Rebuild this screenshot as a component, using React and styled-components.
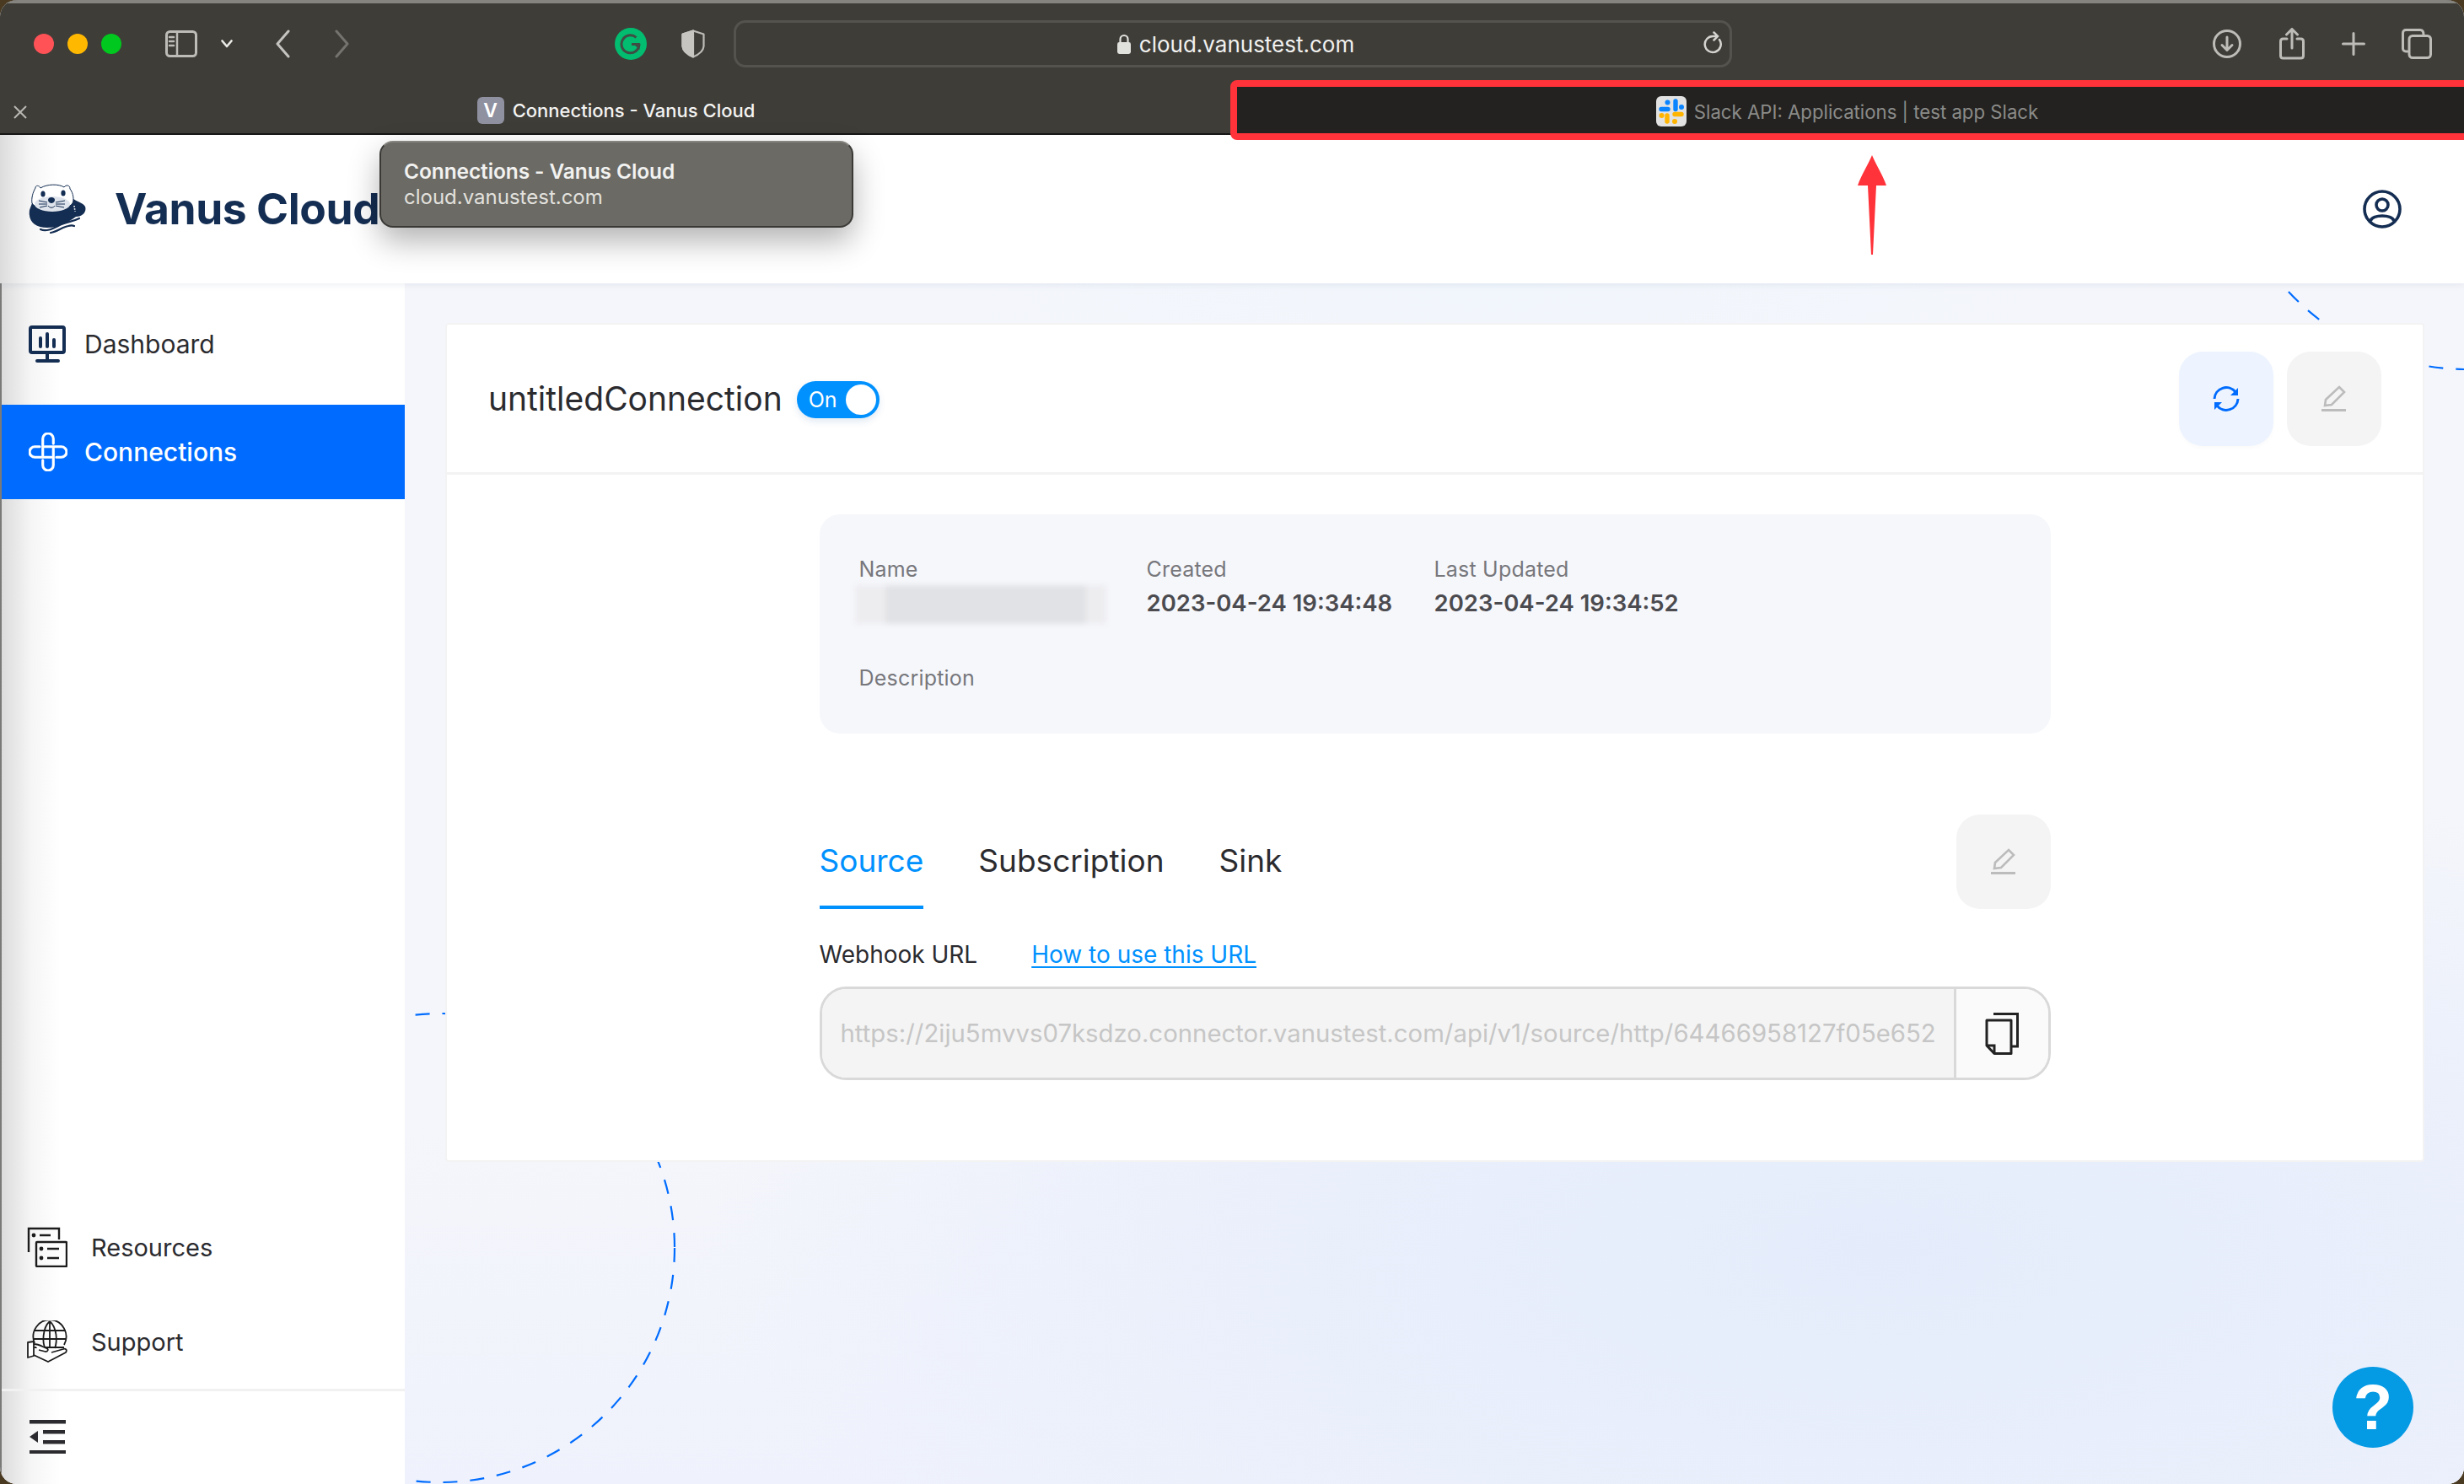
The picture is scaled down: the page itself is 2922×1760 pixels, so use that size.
import React from "react";
import styled, { createGlobalStyle } from "styled-components";

const Global = createGlobalStyle`
  html, body { margin: 0; padding: 0; background: #4a3a22; }
  * { box-sizing: border-box; }
  #root { width: 2922px; height: 1760px; }
`;

const Windowed = styled.div`
  position: relative; width: 2922px; height: 1760px; overflow: hidden;
  border-radius: 20px; display: flex; flex-direction: column;
  font-family: Inter, "Liberation Sans", sans-serif; background: #fff;
`;
const Toolbar = styled.div`
  height: 100px; flex: none; background: #3f3d38; border-top: 4px solid #85847f;
  display: flex; align-items: center; padding: 0 38px 0 40px; position: relative;
`;
const Light = styled.span`
  width: 24px; height: 24px; border-radius: 50%; background: ${p => p.$c}; margin-right: 16px; flex: none;
`;
const ToolIcon = styled.svg`
  flex: none; margin-left: ${p => p.$auto ? "auto" : `${p.$ml || 0}px`}; display: block;
  fill: none; stroke: ${p => p.$stroke || "#bdbcb7"}; stroke-width: 3; stroke-linecap: round; stroke-linejoin: round;
`;
const Address = styled.div`
  width: 1184px; height: 56px; margin-left: 34px; flex: none; border: 3px solid #54534e; border-radius: 14px;
  display: flex; align-items: center; justify-content: center; position: relative; padding-left: 6px;
  color: #f1f1ef; font-size: 26px; gap: 9px;
`;
const Reload = styled.svg`
  position: absolute; right: 6px; top: 10px; fill: none; stroke: #d4d3cf; stroke-width: 2.5; stroke-linecap: round;
`;
const TabRow = styled.div`
  height: 60px; flex: none; background: #3f3d38; border-bottom: 2px solid #161614;
  display: grid; grid-template-columns: 1463px 1fr; position: relative;
`;
const ActiveTab = styled.div`
  position: relative; display: flex; align-items: center; justify-content: center; gap: 10px;
  color: #f4f4f2; font-size: 22px; font-weight: 500; padding: 4px 2px 0 0;
`;
const CloseMark = styled.svg`
  position: absolute; left: 16px; top: 25px; stroke: #b9b8b3; stroke-width: 2; fill: none;
`;
const Favicon = styled.span`
  width: 32px; height: 32px; border-radius: 6px; background: #8f90a0; color: #fff;
  display: flex; align-items: center; justify-content: center; font-size: 23px; font-weight: 600;
`;
const InactiveTab = styled.div`
  background: #232220; display: flex; align-items: center; justify-content: center; gap: 9px;
  color: #8b8b88; font-size: 22.2px; height: 58px; padding: 6px 4px 0 0;
`;
const RedFrame = styled.div`
  position: absolute; left: 1459px; top: 95px; width: 1472px; height: 71px;
  border: 8px solid #ff3339; border-radius: 8px; pointer-events: none; z-index: 5;
`;
const Arrow = styled.svg`
  position: absolute; left: 2201px; top: 182px; z-index: 5;
`;
const Header = styled.header`
  height: 176px; flex: none; background: linear-gradient(90deg, #dcdcdc 0, #f6f6f6 36px, #fff 70px);
  display: flex; align-items: center; justify-content: space-between; padding: 0 74px 0 33px;
  box-shadow: 0 2px 8px rgba(40,60,110,.08); position: relative; z-index: 2;
`;
const Brand = styled.div`
  display: flex; align-items: center; gap: 33px; color: #142d52; margin-top: -3px;
  font-size: 51.5px; font-weight: 700; letter-spacing: -0.4px;
`;
const Tooltip = styled.div`
  position: absolute; left: 450px; top: 167px; width: 562px; height: 103px; z-index: 6;
  background: #6b6a65; border: 2px solid #3a3936; border-top-color: #85847f; border-radius: 16px;
  box-shadow: 0 16px 36px rgba(0,0,0,.3); padding: 19px 27px;
  display: flex; flex-direction: column; gap: 2px;
`;
const TipTitle = styled.div`
  color: #f2f2f0; font-size: 24.5px; font-weight: 600; line-height: 30px; letter-spacing: -0.1px;
`;
const TipSub = styled.div`
  color: #e2e1dd; font-size: 24px; line-height: 28px;
`;
const Body = styled.div`
  flex: 1; display: flex; min-height: 0;
`;
const Sidebar = styled.aside`
  width: 480px; flex: none; display: flex; flex-direction: column; padding-top: 16px;
  background: linear-gradient(90deg, #dcdcdc 0, #f6f6f6 36px, #fff 70px); border-left: 2px solid #7a7a78;
`;
const NavItem = styled.div`
  height: 112px; display: flex; align-items: center; flex: none;
  padding-left: ${p => p.$inset ? 30 : 32}px; gap: ${p => p.$inset ? 28 : 20}px;
  margin-bottom: ${p => p.$mb || 0}px;
  background: ${p => p.$active ? "#006cff" : "transparent"};
  color: ${p => p.$active ? "#fff" : "#2b2b2f"};
  font-size: ${p => p.$inset ? 29 : 30}px; font-weight: ${p => p.$active ? 500 : 400};
`;
const NavSpacer = styled.div`
  flex: 1;
`;
const Collapse = styled.div`
  height: 113px; flex: none; border-top: 3px solid #f1f1f2; padding: 0 0 3px 32px; display: flex; align-items: center;
`;
const Main = styled.main`
  flex: 1; position: relative; overflow: hidden; padding: 47px 47px 0 48px;
  background:
    radial-gradient(ellipse 1400px 600px at 1750px 1150px, #e4ecfb 0, rgba(232,238,251,.8) 55%, rgba(245,246,251,0) 100%),
    radial-gradient(ellipse 900px 260px at 1300px 0, #f1f6fc 0, rgba(245,246,251,0) 100%),
    linear-gradient(180deg, #f5f6fb 0, #f5f6fb 70%, #eff2fc 100%);
`;
const Decor = styled.svg`
  position: absolute; left: 0; top: 0; fill: none; stroke: #006cff; stroke-width: 2.2; stroke-dasharray: 17 15;
`;
const Card = styled.section`
  position: relative; height: 995px; background: #fff; border: 2px solid #f3f3f4; border-radius: 4px;
`;
const CardHead = styled.div`
  height: 178px; border-bottom: 3px solid #f3f3f4; display: flex; align-items: center; padding: 0 49px;
`;
const CardTitle = styled.h1`
  margin: 0 17px 0 0; color: #2b2b2f; font-size: 39px; font-weight: 400; letter-spacing: 0; line-height: 1;
`;
const Switch = styled.div`
  width: 98px; height: 44px; border-radius: 22px; background: #0091ff; color: #fff; font-size: 25px;
  display: flex; align-items: center; justify-content: space-between; padding: 0 4px 0 14px;
  box-shadow: 0 4px 8px rgba(0,80,160,.12); margin-top: 3px;
`;
const Knob = styled.span`
  width: 36px; height: 36px; border-radius: 50%; background: #fff;
`;
const HeadActions = styled.div`
  margin-left: auto; display: flex; gap: 16px;
`;
const SquareBtn = styled.div`
  width: 112px; height: 112px; border-radius: 28px; flex: none;
  background: ${p => p.$tint ? "#edf4ff" : "#f4f4f4"};
  box-shadow: ${p => p.$tint ? "0 3px 4px rgba(0,0,0,.02)" : "none"};
  display: flex; align-items: center; justify-content: center;
`;
const Content = styled.div`
  width: 1460px; margin: 47px auto 0;
`;
const InfoPanel = styled.div`
  height: 260px; background: #f6f7fb; border-radius: 24px; padding: 47px 47px 0;
  display: grid; grid-template-columns: 341px 341px 1fr; grid-template-rows: 129px auto;
`;
const Field = styled.div`
  display: flex; flex-direction: column; gap: 4px; grid-column: ${p => p.$full ? "1 / -1" : "auto"};
`;
const FieldLabel = styled.div`
  color: #77777c; font-size: 25px; line-height: 36px; letter-spacing: 0.2px;
`;
const FieldValue = styled.div`
  color: #4b4b50; font-size: 27.5px; font-weight: 600; line-height: 36px;
`;
const Blurred = styled.div`
  width: 298px; height: 46px; margin: -3px 0 0 -5px;
  background: linear-gradient(90deg, #ededf0 0 12%, #e1e2e5 12% 92%, #ededf0 92%);
  filter: blur(3px);
`;
const TabBar = styled.div`
  display: flex; align-items: flex-start; margin-top: 96px; height: 112px; position: relative;
`;
const TabItem = styled.div`
  height: 112px; display: flex; align-items: center; margin-right: 65px; font-size: 37px;
  color: ${p => p.$active ? "#0091ff" : "#2b2b2f"};
  border-bottom: 4px solid ${p => p.$active ? "#0091ff" : "transparent"};
`;
const TabAction = styled.div`
  margin-left: auto;
`;
const LabelRow = styled.div`
  margin-top: 36px; display: flex; gap: 64px; font-size: 28px; line-height: 36px; color: #2b2b2f;
`;
const HelpLink = styled.a`
  color: #0091ff; text-decoration: underline; text-underline-offset: 4px;
`;
const UrlGroup = styled.div`
  margin-top: 20px; height: 111px; border: 3px solid #d9d9d9; border-radius: 32px; overflow: hidden;
  display: flex;
`;
const UrlText = styled.div`
  flex: 1; min-width: 0; background: #f4f4f4; color: #c6c6c6; font-size: 29.35px;
  display: flex; align-items: center; padding-left: 22px; white-space: nowrap; overflow: hidden;
`;
const CopyAddon = styled.div`
  width: 112px; flex: none; background: #fafafa; border-left: 3px solid #d9d9d9;
  display: flex; align-items: center; justify-content: center;
`;
const HelpFab = styled.div`
  position: absolute; left: 2286px; top: 1285px; width: 96px; height: 96px; border-radius: 50%;
  background: #059ae4; z-index: 3; display: flex; align-items: center; justify-content: center;
  color: #fff; font: 700 76px/1 "Liberation Sans", Arial, sans-serif;
`;

const Otter = () => (
  <svg width="70" height="64" viewBox="13 24 70 64" style={{ flex: "none", display: "block" }}>
    <path d="M15 58C13 72 22 79 36 79C50 79 62 72 70 66C78 66 83 60 81 54C78 49 72 49 66 44C58 30 26 34 18 50Z" fill="#142d52" />
    <path d="M22 32C22 28 27 29 28 32C36 27 50 27 56 31C58 28 63 28 63 33C67 38 68 46 66 50C60 60 24 60 18 50C17 44 19 37 22 32Z" fill="#fff" stroke="#142d52" strokeWidth="1" />
    <ellipse cx="42" cy="51" rx="21" ry="9" fill="#dfe4ec" />
    <ellipse cx="31" cy="39" rx="2.6" ry="3.6" fill="#142d52" />
    <ellipse cx="55" cy="38" rx="2.6" ry="3.6" fill="#142d52" />
    <path d="M37 46C37 42 45 42 45 46C45 49 42 50 41 50C40 50 37 49 37 46Z" fill="#142d52" />
    <path d="M26 47L36 49M26 51L36 51M27 55L36 53M46 49L57 47M46 51L57 51M46 53L56 55M37 53C39 56 43 56 45 53" stroke="#142d52" strokeWidth="1" fill="none" />
    <path d="M68 53L69 60" stroke="#fff" strokeWidth="1.6" strokeDasharray="1.6 1.6" />
    <path d="M28 81C36 85 46 78 53 75C60 72 66 72 74 68M40 85C48 84 54 78 61 77C64 76 66 76 68 77" stroke="#142d52" strokeWidth="2.2" fill="none" strokeLinecap="round" />
  </svg>
);

const Navy = "#142d52";

const DashIcon = () => (
  <svg width="46" height="44" viewBox="0 0 46 44" fill="none" stroke={Navy} strokeWidth="4" style={{ flex: "none" }}>
    <rect x="2" y="2" width="40" height="30" rx="2" />
    <path d="M22 33V40M10 42H35" strokeWidth="4" strokeLinecap="round" />
    <path d="M14 15V25M22 10V25M30 17V25" strokeWidth="4" strokeLinecap="round" />
  </svg>
);
const ConnIcon = () => (
  <svg width="46" height="46" viewBox="0 0 44 44" fill="none" stroke="#fff" strokeWidth="3" strokeLinecap="round" style={{ flex: "none" }}>
    <path d="M16 26V7a6 6 0 0 1 12 0V12.5" />
    <path d="M18 16H37a6 6 0 0 1 0 12H31.5" />
    <path d="M28 18V37a6 6 0 0 1 -12 0V31.5" />
    <path d="M26 28H7a6 6 0 0 1 0 -12H12.5" />
  </svg>
);
const ResIcon = () => (
  <svg width="48" height="48" viewBox="0 0 48 48" fill="none" stroke="#1c1c1c" strokeWidth="2.4" style={{ flex: "none" }}>
    <path d="M2 30V2H38V15" />
    <rect x="11" y="18" width="36" height="29" rx="1" />
    <path d="M15 10H28M24 26H38M24 37H38" />
    <circle cx="8" cy="10" r="2.4" fill="#1c1c1c" stroke="none" />
    <circle cx="17" cy="26" r="2.4" fill="#1c1c1c" stroke="none" />
    <circle cx="17" cy="37" r="2.4" fill="#1c1c1c" stroke="none" />
  </svg>
);
const SupportIcon = () => (
  <svg width="48" height="50" viewBox="0 0 48 50" fill="none" stroke="#1c1c1c" strokeWidth="1.8" style={{ flex: "none" }}>
    <path d="M9 27A19.5 20 0 1 1 44 29" />
    <path d="M27 1C18 9 18 27 22 34M27 1C36 9 36 25 33 33M27 1V32M8 12H46M7 22H47M9 32H44" />
    <path d="M1 26V44L8 42V25ZM8 28C14 28 18 31 23 33C26 34 25 37 22 37L14 35M8 41L25 49L46 38C48 35 46 33 43 34L29 38" strokeLinejoin="round" fill="#fff" />
  </svg>
);
const CollapseIcon = () => (
  <svg width="44" height="40" viewBox="0 0 44 40" fill="#2b2b2f">
    <rect x="1" y="0" width="43" height="4.5" />
    <rect x="1" y="36" width="43" height="4.5" />
    <rect x="17" y="12" width="26" height="4.5" />
    <rect x="17" y="24" width="26" height="4.5" />
    <path d="M11 13V27L1 20Z" />
  </svg>
);
const RefreshIcon = () => (
  <svg width="34" height="34" viewBox="0 0 34 34" fill="none" stroke="#006cff" strokeWidth="3">
    <path d="M3 17A14 14 0 0 1 28 9" />
    <path d="M31 17A14 14 0 0 1 6 25" />
    <path d="M31 4V13H22Z" fill="#006cff" stroke="none" />
    <path d="M3 30V21H12Z" fill="#006cff" stroke="none" />
  </svg>
);
const EditIcon = () => (
  <svg width="32" height="32" viewBox="0 0 32 32" fill="none" stroke="#bcbcbc" strokeWidth="2.6">
    <path d="M22 2L28 8L13 23L5 24L6 17Z" strokeLinejoin="miter" />
    <path d="M1 29.5H30" strokeWidth="3" />
  </svg>
);
const CopyIcon = () => (
  <svg width="40" height="50" viewBox="0 0 40 50" fill="none" stroke="#222" strokeWidth="3">
    <path d="M10 1.5H38.5V40H31" strokeWidth="3" />
    <path d="M2 9H31V48.5H11L2 39Z" strokeLinejoin="round" />
    <path d="M2 39H11V48.5" />
  </svg>
);

export default function App() {
  return (
    <Windowed>
      <Global />
      <Toolbar>
        <Light $c="#ff5257" />
        <Light $c="#ffb800" />
        <Light $c="#00c81e" />
        <ToolIcon width="38" height="32" viewBox="0 0 38 32" $ml={36}>
          <rect x="1.5" y="1.5" width="35" height="29" rx="4" />
          <path d="M14 2V30M5 8H10M5 13H10M5 18H10" strokeWidth="2.5" />
        </ToolIcon>
        <ToolIcon width="14" height="10" viewBox="0 0 14 10" $ml={28} $stroke="#eaeae7">
          <path d="M1.5 1.5L7 8L12.5 1.5" strokeWidth="2.6" />
        </ToolIcon>
        <ToolIcon width="18" height="34" viewBox="0 0 18 34" $ml={50} $stroke="#c4c3bf">
          <path d="M16 2L3 17L16 32" />
        </ToolIcon>
        <ToolIcon width="18" height="34" viewBox="0 0 18 34" $ml={53} $stroke="#74736e">
          <path d="M2 2L15 17L2 32" />
        </ToolIcon>
        <ToolIcon width="38" height="38" viewBox="0 0 38 38" $ml={314} $stroke="none">
          <circle cx="19" cy="19" r="19" fill="#02bd6f" />
          <path d="M25.5 11.5A10.5 10.5 0 1 0 29 19.5H20" fill="none" stroke="#3f4d44" strokeWidth="3" strokeLinecap="butt" />
          <path d="M29.5 18V26L22 19Z" fill="#3f4d44" />
        </ToolIcon>
        <ToolIcon width="28" height="34" viewBox="0 0 28 34" $ml={41}>
          <path d="M14 1.5L26.5 5.5V20C26 26 20 30 14 32.5C8 30 2 26 1.5 20V5.5Z" strokeWidth="2.2" />
          <path d="M14 1.5V32.5C8 30 2 26 1.5 20V5.5Z" fill="#c6c5c0" stroke="#c6c5c0" strokeWidth="2.2" />
        </ToolIcon>
        <Address>
          <svg width="18" height="24" viewBox="0 0 18 24" style={{ flex: "none" }}>
            <path d="M4.5 11V6.5a4.5 4.5 0 0 1 9 0V11" fill="none" stroke="#e0e0dd" strokeWidth="2.2" />
            <rect x="1" y="10" width="16" height="14" rx="2.4" fill="#e0e0dd" />
          </svg>
          cloud.vanustest.com
          <Reload width="26" height="30" viewBox="0 0 26 30">
            <path d="M20 10A9.5 9.5 0 1 1 13 6H17" />
            <path d="M13.5 1.5L18 6L13.5 10.5" />
          </Reload>
        </Address>
        <ToolIcon width="34" height="34" viewBox="0 0 34 34" $auto>
          <circle cx="17" cy="17" r="15.5" />
          <path d="M17 9V24M11 18.5L17 24.5L23 18.5" />
        </ToolIcon>
        <ToolIcon width="30" height="38" viewBox="0 0 30 38" $ml={45}>
          <path d="M9 13H4.5C2.5 13 1.5 14 1.5 16V33C1.5 35 2.5 36 4.5 36H25.5C27.5 36 28.5 35 28.5 33V16C28.5 14 27.5 13 25.5 13H21" />
          <path d="M15 24V2M8.5 8L15 1.5L21.5 8" />
        </ToolIcon>
        <ToolIcon width="28" height="28" viewBox="0 0 28 28" $ml={44}>
          <path d="M14 1.5V26.5M1.5 14H26.5" strokeWidth="3" />
        </ToolIcon>
        <ToolIcon width="36" height="36" viewBox="0 0 36 36" $ml={43}>
          <path d="M7 27H5C3 27 1.5 25.5 1.5 23.5V5C1.5 3 3 1.5 5 1.5H22C24 1.5 26 3 26 7" />
          <rect x="9" y="8.5" width="25.5" height="26" rx="4" />
        </ToolIcon>
      </Toolbar>
      <TabRow>
        <ActiveTab>
          <CloseMark width="16" height="16" viewBox="0 0 16 16"><path d="M1 1L15 15M15 1L1 15" /></CloseMark>
          <Favicon>V</Favicon>
          Connections - Vanus Cloud
        </ActiveTab>
        <InactiveTab>
          <svg width="36" height="36" viewBox="0 0 36 36" style={{ flex: "none" }}>
            <rect width="36" height="36" rx="6" fill="#e2e2e2" />
            <g fill="none" strokeWidth="5.4" strokeLinecap="round">
              <path d="M23 6V15.5M6 15.5H14" stroke="#0a84ff" />
              <path d="M13 23V30M22 21.5H30" stroke="#ffb400" />
            </g>
            <circle cx="13.5" cy="7.5" r="3" fill="#0a84ff" />
            <circle cx="30" cy="13" r="3" fill="#0a84ff" />
            <circle cx="6.5" cy="23" r="3" fill="#ffb400" />
            <circle cx="22" cy="30" r="3" fill="#ffb400" />
          </svg>
          Slack API: Applications | test app Slack
        </InactiveTab>
      </TabRow>
      <RedFrame />
      <Arrow width="38" height="122" viewBox="0 0 38 122">
        <path d="M19 2C24 14 32 26 36 38H24L20 120H18L14 38H2C6 26 14 14 19 2Z" fill="#ff3339" />
      </Arrow>
      <Tooltip>
        <TipTitle>Connections - Vanus Cloud</TipTitle>
        <TipSub>cloud.vanustest.com</TipSub>
      </Tooltip>
      <Header>
        <Brand><Otter />Vanus Cloud</Brand>
        <svg width="46" height="46" viewBox="0 0 46 46" fill="none" stroke={Navy} strokeWidth="3.6">
          <circle cx="23" cy="23" r="21" />
          <circle cx="23" cy="18" r="7" />
          <path d="M9 37C12 29 34 29 37 37" />
        </svg>
      </Header>
      <Body>
        <Sidebar>
          <NavItem $mb={16}><DashIcon />Dashboard</NavItem>
          <NavItem $active><ConnIcon />Connections</NavItem>
          <NavSpacer />
          <NavItem $inset><ResIcon />Resources</NavItem>
          <NavItem $inset><SupportIcon />Support</NavItem>
          <Collapse><CollapseIcon /></Collapse>
        </Sidebar>
        <Main>
          <Decor width="2442" height="1424" viewBox="0 0 2442 1424">
            <circle cx="42" cy="1144" r="278" />
            <circle cx="2445" cy="-186" r="288" />
          </Decor>
          <Card>
            <CardHead>
              <CardTitle>untitledConnection</CardTitle>
              <Switch>On<Knob /></Switch>
              <HeadActions>
                <SquareBtn $tint><RefreshIcon /></SquareBtn>
                <SquareBtn><EditIcon /></SquareBtn>
              </HeadActions>
            </CardHead>
            <Content>
              <InfoPanel>
                <Field>
                  <FieldLabel>Name</FieldLabel>
                  <Blurred />
                </Field>
                <Field>
                  <FieldLabel>Created</FieldLabel>
                  <FieldValue>2023-04-24 19:34:48</FieldValue>
                </Field>
                <Field>
                  <FieldLabel>Last Updated</FieldLabel>
                  <FieldValue>2023-04-24 19:34:52</FieldValue>
                </Field>
                <Field $full>
                  <FieldLabel>Description</FieldLabel>
                </Field>
              </InfoPanel>
              <TabBar>
                <TabItem $active>Source</TabItem>
                <TabItem>Subscription</TabItem>
                <TabItem>Sink</TabItem>
                <TabAction><SquareBtn><EditIcon /></SquareBtn></TabAction>
              </TabBar>
              <LabelRow>
                Webhook URL
                <HelpLink>How to use this URL</HelpLink>
              </LabelRow>
              <UrlGroup>
                <UrlText>https://2iju5mvvs07ksdzo.connector.vanustest.com/api/v1/source/http/64466958127f05e652</UrlText>
                <CopyAddon><CopyIcon /></CopyAddon>
              </UrlGroup>
            </Content>
          </Card>
          <HelpFab>?</HelpFab>
        </Main>
      </Body>
    </Windowed>
  );
}
